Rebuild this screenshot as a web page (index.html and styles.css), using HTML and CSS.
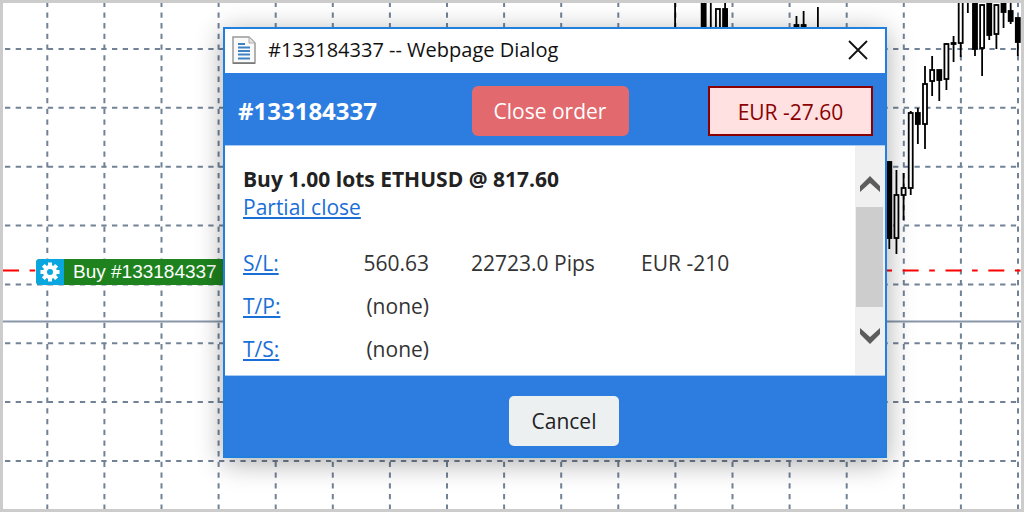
FILE: index.html
```html
<!DOCTYPE html>
<html lang="en">
<head>
    <meta charset="UTF-8">
    <title>#133184337</title>
    <link rel="stylesheet" href="styles.css">
</head>
<body>
    <main class="desktop">
        <svg class="chart" viewBox="0 0 1018 506" preserveAspectRatio="none" aria-hidden="true">
            <g id="grid" class="grid"></g>
            <path class="level" d="M0 318.5H1018"/>
            <path class="order-line" d="M0 267.5H1018"/>
            <g id="candles" class="candles"></g>
        </svg>

        <div class="order-tag">
            <button class="tag-settings" aria-label="Order settings">
                <svg width="20" height="20" viewBox="-10 -10 20 20">
                    <g stroke="#fff" stroke-width="4">
                        <path d="M0-9.500V9.500M-9.500 0H9.500M-6.700-6.700L6.700 6.700M-6.700 6.700L6.700-6.700"/>
                    </g>
                    <circle r="7" fill="#fff"/>
                    <circle r="3" fill="#0aa6df"/>
                </svg>
            </button>
            <span class="tag-text">Buy #133184337</span>
        </div>

        <section class="dialog" role="dialog" aria-labelledby="dialogTitle">
            <div class="titlebar">
                <svg class="page-icon" width="24" height="28" viewBox="0 0 24 28">
                    <path d="M1 1H17L23 7V27H1Z" fill="#fafafa" stroke="#999" stroke-width="1.500"/>
                    <path d="M1 27.200H23" stroke="#777" stroke-width="1.500"/>
                    <path d="M17 1V7H23Z" fill="#e4e4e4" stroke="#aaa"/>
                    <path d="M6 8H13M6 11.500H18M6 15H18M6 18.500H18M6 22.500H18" stroke="#3f82c4" stroke-width="1.800"/>
                </svg>
                <span id="dialogTitle" class="title-text">#133184337 -- Webpage Dialog</span>
                <button class="window-close" aria-label="Close">
                    <svg width="20" height="20" viewBox="0 0 20 20">
                        <path d="M1 1L19 19M19 1L1 19" stroke="#111" stroke-width="1.800"/>
                    </svg>
                </button>
            </div>

            <header class="order-header">
                <h1 class="order-number">#133184337</h1>
                <button class="close-order">Close order</button>
                <div class="profit">EUR -27.60</div>
            </header>

            <div class="content">
                <div class="details">
                    <h2 class="summary">Buy 1.00 lots ETHUSD @ 817.60</h2>
                    <a href="#" class="partial">Partial close</a>
                    <table class="stops">
                        <tr>
                            <th><a href="#">S/L:</a></th>
                            <td class="price">560.63</td>
                            <td class="pips">22723.0 Pips</td>
                            <td>EUR -210</td>
                        </tr>
                        <tr>
                            <th><a href="#">T/P:</a></th>
                            <td class="price">(none)</td>
                            <td></td>
                            <td></td>
                        </tr>
                        <tr>
                            <th><a href="#">T/S:</a></th>
                            <td class="price">(none)</td>
                            <td></td>
                            <td></td>
                        </tr>
                    </table>
                </div>
                <div class="scrollbar">
                    <button class="scroll-up" aria-label="Scroll up">
                        <svg width="20" height="16" viewBox="0 0 20 16">
                            <path d="M0 10L10 0L20 10V16L10 7L0 16Z" fill="#5c5c5c"/>
                        </svg>
                    </button>
                    <div class="scroll-thumb"></div>
                    <button class="scroll-down" aria-label="Scroll down">
                        <svg width="20" height="16" viewBox="0 0 20 16">
                            <path d="M0 6L10 16L20 6V0L10 9L0 0Z" fill="#5c5c5c"/>
                        </svg>
                    </button>
                </div>
            </div>

            <footer class="dialog-footer">
                <button class="cancel">Cancel</button>
            </footer>
        </section>
    </main>
    <script src="chart.js"></script>
</body>
</html>
```
FILE: styles.css
```css
* {
    box-sizing: border-box;
}
body {
    margin: 0;
    font-family: "Open Sans", "Noto Sans", sans-serif;
    color: #333;
    background-color: #fff;
}
button {
    padding: 0;
    border: none;
    background: none;
    font-family: inherit;
    font-size: 21px;
    cursor: pointer;
}
a {
    color: #1a6fd6;
}
.desktop {
    position: relative;
    height: 100vh;
    min-height: 480px;
    border: 3px solid #ccc;
    overflow: hidden;
}

/* chart */
.chart {
    display: block;
    width: 100%;
    height: 100%;
}
.grid {
    stroke: #728296;
    stroke-width: 2;
}
.level {
    stroke: #8796a8;
    stroke-width: 2;
}
.order-line {
    stroke: #f00;
    stroke-width: 2;
    stroke-dasharray: 16 10.600 5.600 10.640;
}
.candles {
    stroke: #000;
    stroke-width: 1.800;
}
.order-tag {
    position: absolute;
    left: 33px;
    top: 256px;
    display: flex;
    align-items: center;
    height: 26px;
    width: 190px;
    border-radius: 4px 0 0 4px;
    overflow: hidden;
    background-color: #1e831e;
}
.tag-settings {
    display: flex;
    align-items: center;
    justify-content: center;
    width: 28px;
    height: 26px;
    background-color: #0aa6df;
}
.tag-text {
    padding-left: 9px;
    font-family: "Liberation Sans", Arial, sans-serif;
    font-size: 19px;
    line-height: 26px;
    color: #fff;
    white-space: nowrap;
}

/* dialog */
.dialog {
    position: absolute;
    left: 220px;
    right: 134px;
    top: 24px;
    border: 2px solid #2180de;
    background-color: #fff;
    box-shadow: 0 5px 26px rgba(0, 0, 0, 0.33);
}
.titlebar {
    display: flex;
    align-items: center;
    height: 44px;
    padding: 0 17px 2px 7px;
}
.title-text {
    flex: 1;
    padding-left: 12px;
    font-size: 20px;
    line-height: 28px;
    color: #111;
}
.window-close {
    display: flex;
}
.order-header {
    display: flex;
    align-items: center;
    justify-content: space-between;
    height: 73px;
    padding: 3px 12px 0 13px;
    border-bottom: 1px solid #a9cbf2;
    background-color: #2d7de0;
}
.order-number {
    min-width: 154px;
    margin: 0;
    font-size: 24px;
    line-height: 30px;
    color: #fff;
}
.close-order {
    width: 157px;
    height: 50px;
    border-radius: 6px;
    background-color: #e2696e;
    color: #fff;
}
.profit {
    width: 165px;
    height: 50px;
    border: 2px solid #8b0000;
    background-color: #ffe1e1;
    font-size: 21px;
    line-height: 48px;
    text-align: center;
    color: #8b0000;
}
.content {
    display: flex;
    height: 229px;
}
.details {
    flex: 1;
    padding: 19px 0 0 18px;
    font-size: 21px;
    line-height: 28px;
    overflow: hidden;
}
.summary {
    margin: 0;
    font-size: 21px;
    line-height: 28px;
    color: #222;
}
.partial {
    display: block;
}
.stops {
    margin-top: 20px;
    border-collapse: collapse;
}
.stops th,
.stops td {
    height: 43px;
    padding: 0;
    font-weight: normal;
    text-align: left;
    white-space: nowrap;
}
.stops th {
    width: 60px;
}
.stops .price {
    width: 126px;
    text-align: right;
}
.stops .pips {
    width: 212px;
    padding-left: 42px;
}
.scrollbar {
    display: flex;
    flex-direction: column;
    width: 30px;
    padding: 0 2px 0 1px;
    background-color: #f0f0f0;
}
.scroll-up,
.scroll-down {
    display: flex;
    justify-content: center;
}
.scroll-up {
    height: 61px;
    padding-top: 30px;
}
.scroll-thumb {
    height: 100px;
    background-color: #cdcdcd;
}
.scroll-down {
    height: 68px;
    padding-top: 21px;
}
.dialog-footer {
    display: flex;
    align-items: center;
    justify-content: center;
    height: 81px;
    padding-top: 10px;
    padding-left: 18px;
    border-top: 1px solid #a9cbf2;
    background-color: #2d7de0;
}
.cancel {
    width: 110px;
    height: 50px;
    border-radius: 5px;
    background-color: #ecf0f1;
    color: #222;
}
```
FILE: chart.js
```javascript
const NS = 'http://www.w3.org/2000/svg';

function add(parent, name, attrs) {
    const el = document.createElementNS(NS, name);
    for (const key in attrs) {
        el.setAttribute(key, attrs[key]);
    }
    parent.appendChild(el);
}

// grid
const grid = document.getElementById('grid');
for (let i = 0; i < 18; i++) {
    const x = 44.3 + i * 57.1;
    add(grid, 'path', { d: `M${x} 0V506`, 'stroke-dasharray': '5.3 5.4', 'stroke-dashoffset': 1.3 });
}
for (let i = 0; i < 8; i++) {
    const y = 46 + i * 58.85;
    add(grid, 'path', { d: `M2 ${y}H1018`, 'stroke-dasharray': '5.3 5.4' });
}

// candles: slot, high, low, body top, body bottom, filled
const data = [
    [-30, 0, 24, 0, 0, 0],
    [-26, 0, 24, 0, 26, 1],
    [-25, 0, 24, 0, 0, 0],
    [-24, 6, 26, 6, 26, 0],
    [-23, 0, 24, 6, 26, 1],
    [-13, 13, 24, 22, 24, 1],
    [-12, 8, 24, 22, 24, 1],
    [-10, 4, 24, 0, 0, 0],
    [0, 158, 246, 159, 235, 1],
    [1, 167, 251, 192, 235, 0],
    [2, 170, 217, 185, 192, 0],
    [3, 108, 192, 110, 185, 0],
    [4, 105, 141, 110, 121, 1],
    [5, 63, 146, 81, 121, 0],
    [6, 53, 93, 67, 78, 0],
    [7, 67, 98, 67, 77, 1],
    [8, 40, 87, 41, 76, 0],
    [9, 33, 59, 40, 41, 1],
    [10, 0, 54, -2, 40, 0],
    [11, 0, 10, 0, 0, 0],
    [12, 0, 53, 0, 46, 1],
    [13, 1, 73, 2, 45, 0],
    [14, 0, 37, 0, 32, 1],
    [15, 1, 46, 2, 31, 0],
    [16, 0, 25, 0, 9, 1],
    [17, 0, 21, 8, 18, 1],
    [18, 15, 53, 15, 39, 1]
];
const candles = document.getElementById('candles');
data.forEach(([slot, high, low, top, bottom, filled]) => {
    const x = 886.3 + slot * 7.14;
    add(candles, 'path', { d: `M${x} ${high}V${low}` });
    if (bottom > top) {
        add(candles, 'rect', {
            x: x - 2,
            y: top,
            width: 4,
            height: bottom - top,
            fill: filled ? '#000' : '#fff'
        });
    }
});
```
